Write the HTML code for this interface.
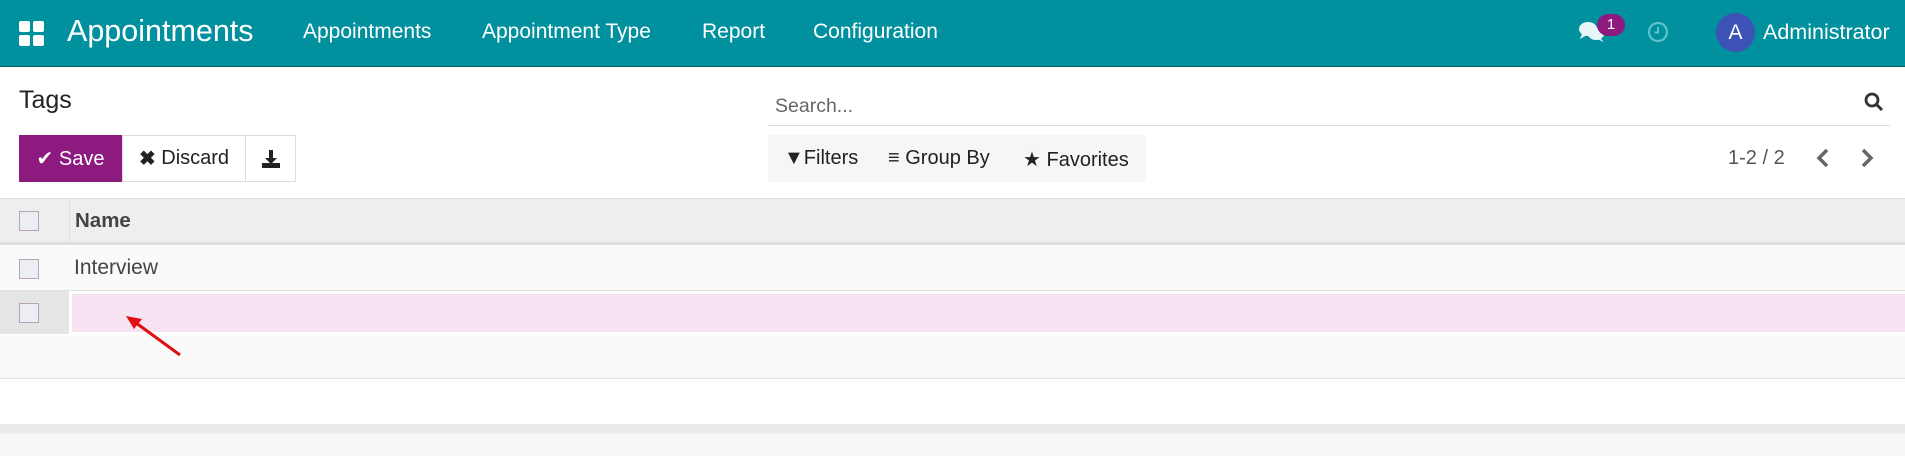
<!DOCTYPE html>
<html><head><meta charset="utf-8"><style>
*{box-sizing:border-box;margin:0;padding:0}
body{width:1905px;height:456px;overflow:hidden;background:#fff;font-family:"Liberation Sans",sans-serif;position:relative;color:#4c4c4c}
.a{position:absolute;white-space:nowrap}
.nav{position:absolute;left:0;top:0;width:1905px;height:67px;background:#01909e;border-bottom:1px solid #0a5f66}
.nav .a{color:#fff;font-size:21px;top:20px}
.btn{position:absolute;top:135px;height:47px;border:1px solid #ddd;background:#fff;font-size:20px;color:#222;display:flex;align-items:center;justify-content:center}
.cb{position:absolute;left:19px;width:20px;height:20px;border:1px solid #b9a3b5;background:#eceef3}
</style></head><body>
<div class="nav">
  <svg class="a" style="left:19px;top:21px" width="25" height="25" viewBox="0 0 25 25" fill="#fff"><rect x="0" y="0" width="11" height="11" rx="2"/><rect x="14" y="0" width="11" height="11" rx="2"/><rect x="0" y="14" width="11" height="11" rx="2"/><rect x="14" y="14" width="11" height="11" rx="2"/></svg>
  <div class="a" style="left:67px;top:14px;font-size:30.5px">Appointments</div>
  <div class="a" style="left:303px">Appointments</div>
  <div class="a" style="left:482px">Appointment Type</div>
  <div class="a" style="left:702px">Report</div>
  <div class="a" style="left:813px">Configuration</div>
  <svg class="a" style="left:1578px;top:20px" width="28" height="24" viewBox="0 0 28 24"><ellipse cx="10" cy="9" rx="9" ry="7" fill="#e6f6f7"/><path d="M4 14 L2 19 L9 15Z" fill="#e6f6f7"/><ellipse cx="18" cy="14" rx="8" ry="6" fill="#e6f6f7"/><path d="M22 18 L26 22 L19 19Z" fill="#e6f6f7"/></svg>
  <div class="a" style="left:1597px;top:14px;width:28px;height:22px;border-radius:11px;background:#8d1a7e;color:#fff;font-size:15px;text-align:center;line-height:22px">1</div>
  <svg class="a" style="left:1647px;top:21px" width="22" height="22" viewBox="0 0 22 22"><circle cx="11" cy="11" r="9" fill="none" stroke="#5cc3cc" stroke-width="2.2"/><path d="M11 6v5.5h-3.5" fill="none" stroke="#5cc3cc" stroke-width="2"/></svg>
  <div class="a" style="left:1716px;top:13px;width:39px;height:39px;border-radius:50%;background:#3d52b5;color:#fff;font-size:21px;text-align:center;line-height:39px">A</div>
  <div class="a" style="left:1763px;font-size:21.5px">Administrator</div>
</div>
<div class="a" style="left:19px;top:86px;font-size:25px;color:#222">Tags</div>
<div class="btn" style="left:19px;width:103px;background:#8d1a7e;border-color:#8d1a7e;color:#fff">&#10004;&nbsp;Save</div>
<div class="btn" style="left:122px;width:124px"><b>&#10006;</b>&nbsp;Discard</div>
<div class="btn" style="left:245px;width:51px"><svg width="20" height="20" viewBox="0 0 20 20" fill="#222"><path d="M8 1h4v8h4l-6 6-6-6h4z"/><rect x="1" y="14" width="18" height="5"/></svg></div>
<div class="a" style="left:775px;top:95px;font-size:19.5px;color:#666">Search...</div>
<div class="a" style="left:768px;top:125px;width:1122px;height:1px;background:#ddd"></div>
<svg class="a" style="left:1864px;top:92px" width="20" height="20" viewBox="0 0 20 20"><circle cx="8" cy="8" r="6" fill="none" stroke="#333" stroke-width="2.8"/><path d="M12.5 12.5L18 18" stroke="#333" stroke-width="3"/></svg>
<div class="a" style="left:768px;top:135px;width:378px;height:47px;background:#f5f6f8"></div>
<div class="a" style="left:784px;top:147px;font-size:20px;color:#222">&#9660;Filters</div>
<div class="a" style="left:888px;top:147px;font-size:20px;color:#222">&#8801; Group By</div>
<div class="a" style="left:1023px;top:147px;font-size:20px;color:#222">&#9733; Favorites</div>
<div class="a" style="left:1728px;top:147px;font-size:20px;color:#555">1-2 / 2</div>
<svg class="a" style="left:1816px;top:148px" width="14" height="20" viewBox="0 0 14 20"><path d="M11 2L3 10l8 8" fill="none" stroke="#666" stroke-width="3.5"/></svg>
<svg class="a" style="left:1860px;top:148px" width="14" height="20" viewBox="0 0 14 20"><path d="M3 2l8 8-8 8" fill="none" stroke="#666" stroke-width="3.5"/></svg>
<div class="a" style="left:0;top:198px;width:1905px;height:47px;background:#eeeeee;border-top:1px solid #ddd;border-bottom:3px solid #ddd"></div>
<div class="a" style="left:69px;top:199px;width:1px;height:43px;background:#dcdcdc"></div>
<div class="cb" style="top:211px"></div>
<div class="a" style="left:75px;top:209px;font-size:20.5px;font-weight:bold;color:#444">Name</div>
<div class="a" style="left:0;top:246px;width:1905px;height:45px;background:#fafafa;border-bottom:1px solid #e2e2e2"></div>
<div class="cb" style="top:259px"></div>
<div class="a" style="left:74px;top:256px;font-size:21px;color:#444">Interview</div>
<div class="a" style="left:0;top:291px;width:69px;height:43px;background:#e5e5e5"></div>
<div class="a" style="left:69px;top:291px;width:1836px;height:43px;background:#fff"></div>
<div class="a" style="left:72px;top:294px;width:1833px;height:38px;background:#f6e4f3"></div>
<div class="cb" style="top:303px"></div>
<div class="a" style="left:0;top:335px;width:1905px;height:44px;background:#fafafa;border-bottom:1px solid #e2e2e2"></div>
<div class="a" style="left:0;top:424px;width:1905px;height:10px;background:#ebebeb"></div>
<div class="a" style="left:0;top:434px;width:1905px;height:22px;background:#f7f7f9"></div>
<svg class="a" style="left:0;top:0" width="300" height="400"><path d="M180 355L132 320" stroke="#e01010" stroke-width="3"/><path d="M126 316L142 319L134 329Z" fill="#e01010"/></svg>
</body></html>
